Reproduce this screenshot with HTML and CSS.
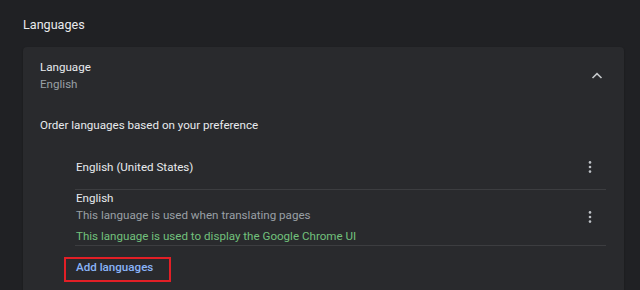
FILE: index.html
```html
<!DOCTYPE html>
<html lang="en">
<head>
    <meta charset="UTF-8">
    <title>Languages</title>
    <link rel="stylesheet" href="styles.css">
</head>
<body>
    <h2 class="section-title">Languages</h2>
    <div class="card">
        <div class="lang-header">
            <div class="lang-header-text">
                <div class="label">Language</div>
                <div class="sublabel">English</div>
            </div>
            <button class="icon-btn" aria-label="Collapse">
                <svg width="20" height="20" viewBox="0 0 20 20">
                    <path d="M5.5 12 L10 7.6 L14.5 12" fill="none" stroke="#c4c7ca" stroke-width="1.6"/>
                </svg>
            </button>
        </div>

        <div class="order-title">Order languages based on your preference</div>

        <div class="lang-list">
            <div class="lang-row single">
                <div class="lang-info">
                    <div class="label">English (United States)</div>
                </div>
                <button class="icon-btn more" aria-label="More actions">
                    <svg width="20" height="20" viewBox="0 0 20 20">
                        <circle cx="10" cy="5.4" r="1.3" fill="#bdc1c6"/>
                        <circle cx="10" cy="10" r="1.3" fill="#bdc1c6"/>
                        <circle cx="10" cy="14.6" r="1.3" fill="#bdc1c6"/>
                    </svg>
                </button>
            </div>
            <div class="lang-row">
                <div class="lang-info">
                    <div class="label">English</div>
                    <div class="sublabel">This language is used when translating pages</div>
                    <div class="ui-note">This language is used to display the Google Chrome UI</div>
                </div>
                <button class="icon-btn more" aria-label="More actions">
                    <svg width="20" height="20" viewBox="0 0 20 20">
                        <circle cx="10" cy="5.4" r="1.3" fill="#bdc1c6"/>
                        <circle cx="10" cy="10" r="1.3" fill="#bdc1c6"/>
                        <circle cx="10" cy="14.6" r="1.3" fill="#bdc1c6"/>
                    </svg>
                </button>
            </div>
        </div>

        <div class="add-wrap">
            <button class="add-btn">Add languages</button>
        </div>
    </div>
</body>
</html>
```

FILE: styles.css
```css
html, body {
    height: 290px;
}

body {
    margin: 0;
    padding: 15px 16px 0 23px;
    box-sizing: border-box;
    background-color: #202124;
    font-family: Roboto, "Liberation Sans", Arial, sans-serif;
    font-size: 11.6px;
    color: #e8eaed;
    overflow: hidden;
}

.section-title {
    margin: 0 0 12px;
    font-size: 12.6px;
    font-weight: 400;
    line-height: 20px;
    color: #e8eaed;
}

.card {
    box-sizing: border-box;
    height: 243px;
    background-color: #292a2d;
    border-radius: 4px 4px 0 0;
    box-shadow: 0 1px 2px rgba(0, 0, 0, 0.35);
    padding: 11.5px 0 0 17px;
}

.label {
    line-height: 17px;
    color: #e8eaed;
}

.sublabel {
    line-height: 17px;
    color: #9aa0a6;
}

.lang-header {
    display: flex;
    align-items: center;
    justify-content: space-between;
    padding-right: 17px;
}

.icon-btn {
    display: flex;
    align-items: center;
    justify-content: center;
    width: 20px;
    height: 20px;
    padding: 0;
    background: none;
    border: none;
    cursor: pointer;
}

.order-title {
    margin-top: 24px;
    line-height: 17px;
    color: #e8eaed;
}

.lang-list {
    margin: 12px 18px 0 35px;
}

.lang-row {
    display: flex;
    align-items: center;
    justify-content: space-between;
    padding-left: 1px;
    padding-right: 6px;
    border-bottom: 1px solid #3c3d40;
}

.lang-row.single {
    padding-top: 11.5px;
    padding-bottom: 11.5px;
}

.ui-note {
    margin-top: 4px;
    line-height: 17px;
    color: #72c17c;
}

.add-wrap {
    margin: 11.5px 0 0 24px;
}

.add-btn {
    padding: 0 16px 4px 10px;
    background: none;
    border: 2px solid #e21f26;
    font-family: inherit;
    font-size: 11.6px;
    font-weight: 500;
    line-height: 17px;
    color: #8ab4f8;
    cursor: pointer;
}
```
